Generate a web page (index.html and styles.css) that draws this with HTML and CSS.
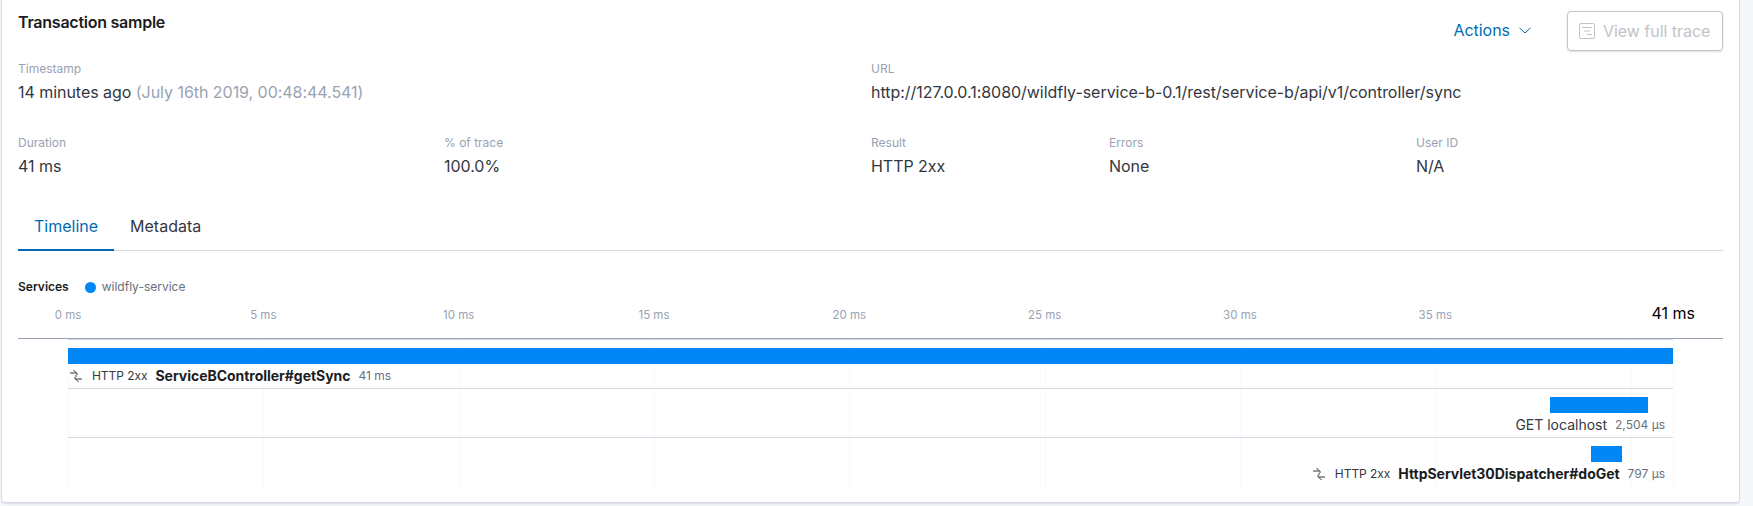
FILE: index.html
```html
<!DOCTYPE html>
<html lang="en">
<head>
<meta charset="utf-8">
<title>Transaction sample</title>
<link rel="stylesheet" href="styles.css">
</head>
<body>
<section class="panel">
  <header class="head">
    <h2 class="title">Transaction sample</h2>
    <div class="actions">
      <button class="actions-btn">Actions
        <svg class="chev" viewBox="0 0 12 7" width="12" height="7"><path d="M.5.8 6 6l5.500-5.200" fill="none" stroke="#006bb4" stroke-width="1"/></svg>
      </button>
      <button class="trace-btn">
        <svg viewBox="0 0 16 16" width="16" height="16"><rect x=".5" y=".5" width="15" height="15" rx="1.5" fill="none" stroke="#c2c3c6"/><path d="M3 4.500h10M5 8h6M8 11.500h5" stroke="#c2c3c6" fill="none"/></svg>
        View full trace
      </button>
    </div>
  </header>

  <div class="stats stats-a">
    <div class="stat"><div class="k">Timestamp</div><div class="v">14 minutes ago <span class="muted">(July 16th 2019, 00:48:44.541)</span></div></div>
    <div class="stat"><div class="k">URL</div><div class="v">http://127.0.0.1:8080/wildfly-service-b-0.1/rest/service-b/api/v1/controller/sync</div></div>
  </div>
  <div class="stats stats-b">
    <div class="stat"><div class="k">Duration</div><div class="v">41 ms</div></div>
    <div class="stat"><div class="k">% of trace</div><div class="v">100.0%</div></div>
    <div class="stat"><div class="k">Result</div><div class="v">HTTP 2xx</div></div>
    <div class="stat"><div class="k">Errors</div><div class="v">None</div></div>
    <div class="stat"><div class="k">User ID</div><div class="v">N/A</div></div>
  </div>

  <nav class="tabs">
    <a class="tab active">Timeline</a>
    <a class="tab">Metadata</a>
  </nav>

  <div class="legend">
    <strong>Services</strong>
    <span class="dot"></span>
    <span class="svc">wildfly-service</span>
  </div>

  <div class="axis">
    <div class="plot">
      <span class="tick" style="left:0">0 ms</span>
      <span class="tick" style="left:12.17%">5 ms</span>
      <span class="tick" style="left:24.34%">10 ms</span>
      <span class="tick" style="left:36.51%">15 ms</span>
      <span class="tick" style="left:48.68%">20 ms</span>
      <span class="tick" style="left:60.85%">25 ms</span>
      <span class="tick" style="left:73.02%">30 ms</span>
      <span class="tick" style="left:85.19%">35 ms</span>
    </div>
    <span class="tick-end">41 ms</span>
  </div>

  <div class="rows">
    <i class="grid" style="left:0"></i>
    <i class="grid" style="left:12.17%"></i>
    <i class="grid" style="left:24.34%"></i>
    <i class="grid" style="left:36.51%"></i>
    <i class="grid" style="left:48.68%"></i>
    <i class="grid" style="left:60.85%"></i>
    <i class="grid" style="left:73.02%"></i>
    <i class="grid" style="left:85.19%"></i>
    <i class="grid" style="left:97.36%"></i>
    <i class="grid" style="left:100%"></i>

    <div class="row">
      <div class="bar" style="margin-left:0;width:100%"></div>
      <div class="label">
        <svg class="ic" viewBox="0 0 12 12" width="12" height="12"><path d="M0 3h6.500M3.500 0l4 4-2 2M12 9H5.500M8.500 12l-4-4 2-2" fill="none" stroke="#343741"/></svg>
        <span class="res">HTTP 2xx</span>
        <b class="name">ServiceBController#getSync</b>
        <span class="time">41 ms</span>
      </div>
    </div>
    <div class="row">
      <div class="bar" style="margin-left:92.34%;width:6.11%"></div>
      <div class="label end">
        <span class="plain">GET localhost</span>
        <span class="time">2,504 μs</span>
      </div>
    </div>
    <div class="row last">
      <div class="bar" style="margin-left:94.89%;width:1.93%"></div>
      <div class="label end">
        <svg class="ic" viewBox="0 0 12 12" width="12" height="12"><path d="M0 3h6.500M3.500 0l4 4-2 2M12 9H5.500M8.500 12l-4-4 2-2" fill="none" stroke="#343741"/></svg>
        <span class="res">HTTP 2xx</span>
        <b class="name">HttpServlet30Dispatcher#doGet</b>
        <span class="time">797 μs</span>
      </div>
    </div>
  </div>
</section>
</body>
</html>
```
FILE: styles.css
```css
* { box-sizing: border-box; }
html, body { margin: 0; height: 100%; }
body {
  background: #f5f7fa;
  font-family: Inter, "Liberation Sans", sans-serif;
  color: #343741;
  overflow: hidden;
}
.panel {
  width: 1739px;
  height: 503px;
  margin-left: 1px;
  padding: 0 16px;
  background: #fff;
  border: 1px solid #d3dae6;
  border-top: 0;
  border-radius: 0 0 4px 4px;
  box-shadow: 0 2px 2px -1px rgba(152, 162, 179, .3);
}
.head {
  display: flex;
  justify-content: space-between;
  align-items: flex-start;
  height: 60px;
}
.title {
  margin: 10px 0 0;
  font-size: 16px;
  line-height: 24px;
  font-weight: 600;
  letter-spacing: -.25px;
  color: #1a1c21;
}
.actions { display: flex; align-items: center; margin-top: 11px; }
button { font: inherit; background: none; }
.actions-btn {
  display: flex;
  align-items: center;
  gap: 9px;
  border: 0;
  padding: 0 0 2px;
  margin-right: 36px;
  font-size: 16px;
  letter-spacing: -.04px;
  color: #006bb4;
}
.trace-btn {
  display: flex;
  align-items: center;
  gap: 8px;
  width: 156px;
  height: 40px;
  padding: 0 0 1px 11px;
  border: 1px solid #c2c3c6;
  border-radius: 4px;
  font-size: 16px;
  letter-spacing: -.04px;
  color: #c2c3c6;
  white-space: nowrap;
  box-shadow: 0 1px 2px rgba(152, 162, 179, .35);
}
.stats { display: grid; }
.stats-a { grid-template-columns: 853px 1fr; height: 74px; }
.stats-b { grid-template-columns: 426px 427px 238px 307px 1fr; height: 65px; }
.k { font-size: 12px; line-height: 18px; color: #98a2b3; }
.v { margin-top: 2px; font-size: 16px; line-height: 24px; letter-spacing: -.04px; color: #343741; }
.muted { color: #98a2b3; }
.tabs {
  display: flex;
  height: 52px;
  border-bottom: 1px solid #d3dae6;
}
.tab {
  height: 52px;
  padding: 15px 16px 0;
  font-size: 16px;
  line-height: 24px;
  color: #343741;
}
.tab.active { color: #006bb4; border-bottom: 2px solid #006bb4; }
.legend {
  display: flex;
  align-items: center;
  height: 18px;
  margin-top: 27px;
  font-size: 12px;
  line-height: 18px;
}
.legend strong { font-weight: 600; color: #1a1c21; }
.dot {
  width: 11px;
  height: 11px;
  margin: 1px 6px 0 16px;
  border-radius: 50%;
  background: #0086f5;
}
.svc { color: #69707d; }
.axis {
  position: relative;
  height: 43px;
  border-bottom: 1px solid #98a2b3;
}
.plot {
  position: absolute;
  top: 0;
  bottom: 0;
  left: 50px;
  right: 50px;
}
.tick {
  position: absolute;
  transform: translateX(-50%);
  top: 11px;
  font-size: 11.5px;
  line-height: 16px;
  color: #98a2b3;
  white-space: nowrap;
}
.tick-end {
  position: absolute;
  right: 28px;
  top: 5px;
  font-size: 16px;
  line-height: 24px;
  color: #000;
}
.rows {
  position: relative;
  margin: 0 50px;
  border-top: 1px solid #d3dae6;
}
.grid {
  position: absolute;
  top: 0;
  bottom: 0;
  width: 1px;
  border-left: 1px dotted #f3f4f7;
}
.row {
  position: relative;
  height: 49px;
  padding-top: 8px;
  border-bottom: 1px solid #d3dae6;
}
.row.last { border-bottom: 0; }
.bar { height: 16px; background: #0086f5; position: relative; }
.label {
  display: flex;
  align-items: center;
  height: 23px;
  white-space: nowrap;
  padding-left: 2px;
}
.label.end { justify-content: flex-end; padding-right: 8px; }
.ic { margin-right: 10px; }
.res { font-size: 12px; letter-spacing: -.05px; margin-right: 8px; color: #343741; }
.name { font-size: 14px; font-weight: 700; letter-spacing: -.03px; color: #1a1c21; margin-right: 8px; position: relative; }
.plain { font-size: 14px; color: #343741; margin-right: 8px; position: relative; }
.time { font-size: 12px; color: #69707d; }
```
